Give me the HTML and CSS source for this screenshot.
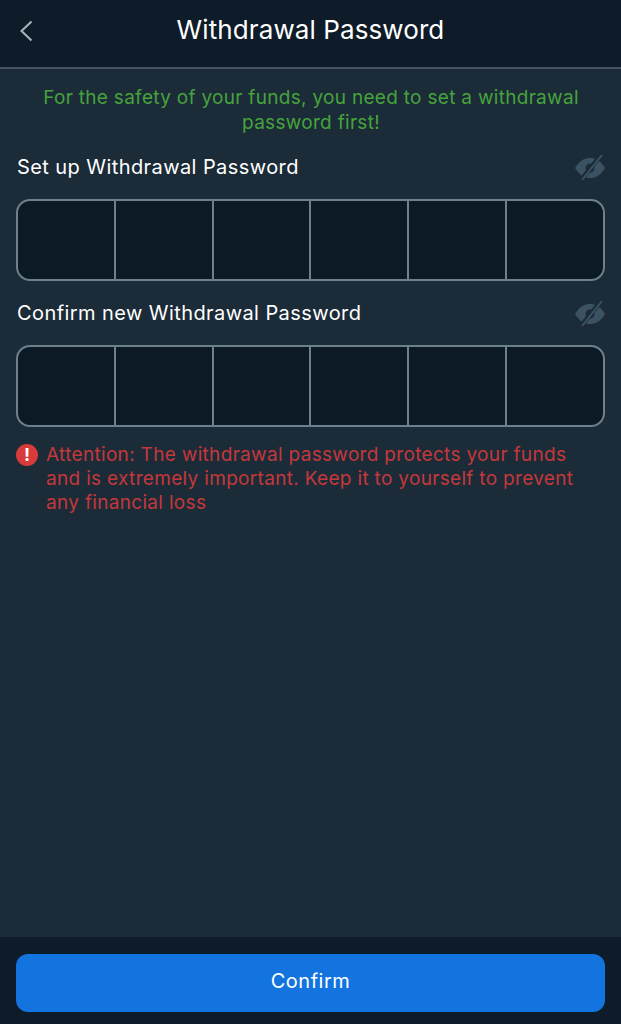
FILE: index.html
```html
<!DOCTYPE html>
<html lang="en">
<head>
<meta charset="utf-8">
<title>Withdrawal Password</title>
<link rel="stylesheet" href="styles.css">
</head>
<body>
<div class="page">
  <header class="topbar">
    <svg class="back" width="16" height="24" viewBox="0 0 16 24"><path d="M13.5 2.5 L3.5 12 L13.5 21.5" fill="none" stroke="#aab4bf" stroke-width="2"/></svg>
    <h1 class="title">Withdrawal Password</h1>
  </header>
  <main class="content">
    <p class="notice">For the safety of your funds, you need to set a withdrawal password first!</p>
    <div class="field-head">
      <span class="label">Set up Withdrawal Password</span>
      <svg class="eye" width="32" height="26" viewBox="0 0 32 26"><path d="M1 14 C6 6 11 4 16 4 C21 4 26 6 31 14 C26 22 21 24 16 24 C11 24 6 22 1 14 Z" fill="#3b5262"/><circle cx="16" cy="14" r="4.5" fill="#1b2b38"/><path d="M27 1 L7 26" stroke="#1b2b38" stroke-width="4.5"/><path d="M28 1 L8 26" stroke="#3b5262" stroke-width="2"/></svg>
    </div>
    <div class="pin">
      <div class="cell"></div><div class="cell"></div><div class="cell"></div><div class="cell"></div><div class="cell"></div><div class="cell"></div>
    </div>
    <div class="field-head">
      <span class="label">Confirm new Withdrawal Password</span>
      <svg class="eye" width="32" height="26" viewBox="0 0 32 26"><path d="M1 14 C6 6 11 4 16 4 C21 4 26 6 31 14 C26 22 21 24 16 24 C11 24 6 22 1 14 Z" fill="#3b5262"/><circle cx="16" cy="14" r="4.5" fill="#1b2b38"/><path d="M27 1 L7 26" stroke="#1b2b38" stroke-width="4.5"/><path d="M28 1 L8 26" stroke="#3b5262" stroke-width="2"/></svg>
    </div>
    <div class="pin">
      <div class="cell"></div><div class="cell"></div><div class="cell"></div><div class="cell"></div><div class="cell"></div><div class="cell"></div>
    </div>
    <div class="attention">
      <span class="alert"><span class="alert-mark">!</span></span>
      <p class="attention-text">Attention: The withdrawal password protects your funds and is extremely important. Keep it to yourself to prevent any financial loss</p>
    </div>
  </main>
  <footer class="footer">
    <button class="confirm" type="button">Confirm</button>
  </footer>
</div>
</body>
</html>
```
FILE: styles.css
```css
* { box-sizing: border-box; }
html, body { margin: 0; padding: 0; height: 100%; }
body { background: #1b2b38; font-family: Inter, "Liberation Sans", sans-serif; overflow: hidden; }
.page { height: 1024px; display: flex; flex-direction: column; }
.topbar { height: 69px; flex: none; background: #0e1b28; border-bottom: 2px solid #42535f; display: flex; align-items: center; justify-content: center; position: relative; padding-bottom: 7px; }
.back { position: absolute; left: 18px; top: 19px; }
.title { margin: 0; font-size: 26px; line-height: 32px; font-weight: 400; color: #fff; letter-spacing: 0.1px; }
.content { flex: 1; padding: 16px 16px 0 17px; }
.notice { margin: 0; text-align: center; color: #46a33c; font-size: 19px; line-height: 25px; padding: 0 10px; letter-spacing: 0.3px; }
.field-head { display: flex; align-items: center; justify-content: space-between; height: 26px; margin-top: 19px; margin-bottom: 19px; }
.label { color: #fff; font-size: 20px; line-height: 26px; letter-spacing: 0.42px; }
.eye { flex: none; margin-right: -1px; }
.pin { display: flex; height: 82px; width: 589px; margin-left: -1px; background: #0c1a26; border: 2px solid #6d808e; border-radius: 14px; overflow: hidden; }
.cell { flex: 1; border-right: 2px solid #6d808e; }
.cell:last-child { border-right: 0; }
.attention { display: flex; gap: 8px; margin-top: 16px; margin-left: -1px; padding-right: 20px; }
.alert { width: 22px; height: 22px; border-radius: 50%; background: #d93a3a; flex: none; display: flex; align-items: center; justify-content: center; margin-top: 1px; }
.alert-mark { color: #fff; font-size: 18px; font-weight: 700; line-height: 22px; }
.attention-text { margin: 0; color: #c4383b; font-size: 19px; line-height: 24px; letter-spacing: 0.32px; }
.footer { height: 87px; flex: none; background: #0e1b28; padding: 17px 16px 0; }
.confirm { display: block; width: 589px; height: 58px; border: 0; border-radius: 12px; background: #1374e0; color: #fff; font: 400 20px Inter, "Liberation Sans", sans-serif; letter-spacing: 0.5px; padding: 0 0 4px; }
```
